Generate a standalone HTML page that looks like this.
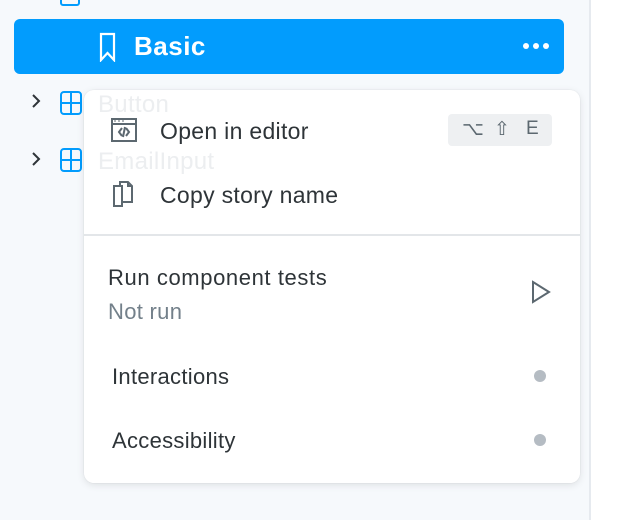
<!DOCTYPE html>
<html><head><style>
body{margin:0;width:618px;height:520px;background:#fff;position:relative;overflow:hidden;font-family:"Liberation Sans",sans-serif;}
.side{position:absolute;left:0;top:0;width:589px;height:520px;background:#f6f9fc;border-right:2px solid #e6eaef;}
.a{position:absolute;}
.sel{left:14px;top:19px;width:550px;height:55px;background:#029cfd;border-radius:6px;}
.menu{left:84px;top:90px;width:496px;height:393px;background:rgba(255,255,255,0.96);border-radius:10px;box-shadow:0 2px 8px rgba(0,0,0,.1),0 0 1px rgba(0,0,0,.15);}
.t{position:absolute;font-size:23px;color:#2e3438;white-space:nowrap;letter-spacing:0.3px;}
</style></head><body>
<div class="side"></div>
<div class="a" style="left:60px;top:-10px;width:16px;height:12px;border:2px solid #029cfd;border-radius:3px"></div>
<div class="a sel"></div>
<svg class="a" style="left:98px;top:32px" width="20" height="30"><path d="M3 2h13v26l-6.5-7-6.5 7z" fill="none" stroke="#fff" stroke-width="2.2"/></svg>
<div class="t" style="left:134px;top:31px;color:#fff;font-weight:bold;font-size:26px;letter-spacing:0.5px">Basic</div>
<div class="a" style="left:523px;top:43px;width:6px;height:6px;border-radius:50%;background:#fff;box-shadow:10px 0 #fff,20px 0 #fff"></div>
<svg class="a" style="left:30px;top:93px" width="16" height="80"><path d="M3 2l6 6-6 6M3 60l6 6-6 6" fill="none" stroke="#2e3438" stroke-width="2"/></svg>
<svg class="a" style="left:50px;top:90px" width="40" height="90"><g fill="none" stroke="#029cfd" stroke-width="2"><rect x="11" y="2" width="20" height="22" rx="3"/><path d="M21 2v22M11 13h20"/><rect x="11" y="59" width="20" height="22" rx="3"/><path d="M21 59v22M11 70h20"/></g></svg>
<div class="a menu"></div>
<div class="t" style="left:98px;top:91px;color:#eceef0;font-size:24px">Button</div>
<div class="t" style="left:98px;top:148px;color:#eceef0;font-size:24px">EmailInput</div>
<svg class="a" style="left:110px;top:117px" width="30" height="26"><g fill="none" stroke="#5c6870" stroke-width="2"><rect x="2" y="2" width="24" height="22"/><path d="M2 7h24M12 11l-3 4 3 4M16 11l3 4-3 4M15 10l-2 10"/></g><path d="M4 4h2M8 4h2M12 4h2" stroke="#5c6870" stroke-width="1"/></svg>
<div class="t" style="left:160px;top:118px">Open in editor</div>
<div class="a" style="left:448px;top:114px;width:104px;height:32px;background:#eef0f2;border-radius:4px;font-size:19px;color:#5c6870"><span class="a" style="left:14px;top:4px">⌥</span><span class="a" style="left:46px;top:4px">⇧</span><span class="a" style="left:78px;top:4px">E</span></div>
<svg class="a" style="left:110px;top:178px" width="32" height="32"><g fill="none" stroke="#5c6870" stroke-width="2"><path d="M4 8h8v20H4zM12 8h0"/><path d="M12 24h10V8l-4-4h-8v4"/><path d="M18 4v4h4"/></g></svg>
<div class="t" style="left:160px;top:182px">Copy story name</div>
<div class="a" style="left:84px;top:234px;width:496px;height:2px;background:#e3e6e9"></div>
<div class="t" style="left:108px;top:265px;font-size:22px;letter-spacing:0.6px">Run component tests</div>
<div class="t" style="left:108px;top:299px;font-size:22px;color:#73808a">Not run</div>
<svg class="a" style="left:530px;top:280px" width="22" height="24"><path d="M3 2l16 10-16 10z" fill="none" stroke="#5c6870" stroke-width="2"/></svg>
<div class="t" style="left:112px;top:364px;font-size:22px">Interactions</div>
<div class="a" style="left:534px;top:370px;width:12px;height:12px;border-radius:50%;background:#b5bcc3"></div>
<div class="t" style="left:112px;top:428px;font-size:22px">Accessibility</div>
<div class="a" style="left:534px;top:434px;width:12px;height:12px;border-radius:50%;background:#b5bcc3"></div>
</body></html>
